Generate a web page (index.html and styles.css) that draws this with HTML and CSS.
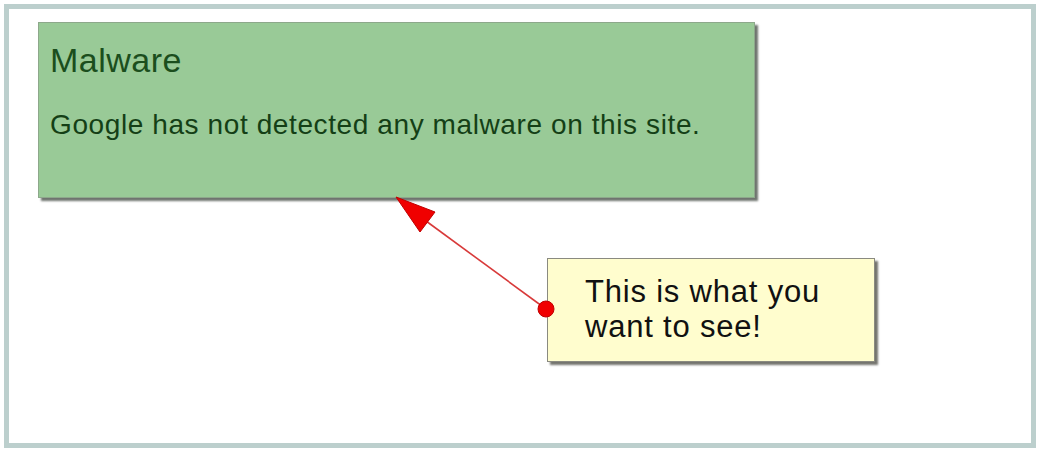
FILE: index.html
```html
<!DOCTYPE html>
<html lang="en">
<head>
    <meta charset="UTF-8">
    <title>Malware status</title>
    <link rel="stylesheet" href="styles.css">
</head>
<body>
    <div class="frame">
        <div class="status-card">
            <h1>Malware</h1>
            <p>Google has not detected any malware on this site.</p>
        </div>

        <div class="callout">
            <p>This is what you<br>want to see!</p>
        </div>
    </div>

    <!-- pointer from the callout to the status card -->
    <svg class="pointer" width="1040" height="452" viewBox="0 0 1040 452">
        <line x1="546" y1="309" x2="426" y2="221" stroke="#d83a3a" stroke-width="1.6"/>
        <polygon points="396,197 435,212 420,232" fill="#f00000" stroke="#c00000" stroke-width="1"/>
        <circle cx="546" cy="309" r="8" fill="#f00000" stroke="#c00000" stroke-width="1"/>
    </svg>
</body>
</html>
```

FILE: styles.css
```css
* {
    margin: 0;
    padding: 0;
    box-sizing: border-box;
}

body {
    font-family: 'Liberation Sans', Arial, sans-serif;
    background: #ffffff;
    width: 1040px;
    height: 452px;
    padding: 4px;
    position: relative;
}

.frame {
    width: 1032px;
    height: 444px;
    border: 5px solid #bccfcd;
    background: #ffffff;
    padding: 13px 0 0 29px;
}

.status-card {
    width: 717px;
    height: 176px;
    background: #99ca97;
    border: 1px solid #8da88b;
    box-shadow: 3px 3px 2px #6f746f;
    padding: 17px 0 0 11px;
    color: #1b4e1d;
}

.status-card h1 {
    font-size: 34px;
    font-weight: 400;
    line-height: 40px;
    letter-spacing: 0.5px;
    margin-bottom: 29px;
}

.status-card p {
    font-size: 28px;
    line-height: 32px;
    letter-spacing: 0.6px;
    color: #143f16;
}

.callout {
    position: absolute;
    left: 547px;
    top: 258px;
    width: 328px;
    height: 104px;
    background: #fffdce;
    border: 1px solid #8a8a80;
    box-shadow: 3px 3px 2px #74746e;
    padding: 15px 0 0 37px;
}

.callout p {
    font-size: 31px;
    line-height: 35px;
    letter-spacing: 0.8px;
    color: #111111;
}

.pointer {
    position: absolute;
    left: 0;
    top: 0;
    pointer-events: none;
}
```
